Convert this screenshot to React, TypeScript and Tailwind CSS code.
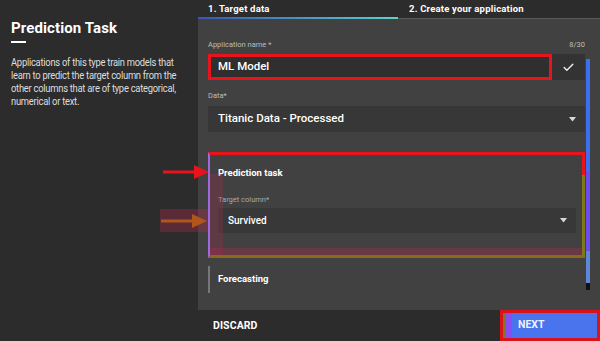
import { Check } from "lucide-react";

const DESC =
  "Applications of this type train models that learn to predict the target column from the other columns that are of type categorical, numerical or text.";

function Caret() {
  return (
    <svg width="7" height="5" viewBox="0 0 7 5" className="shrink-0">
      <path d="M0 0h7L3.5 4.5z" fill="#d8d8d8" />
    </svg>
  );
}

function Arrow({ color, className }: { color: string; className: string }) {
  return (
    <svg width="46" height="14" viewBox="0 0 46 14" className={className}>
      <rect x="0" y="5.5" width="34" height="3" fill={color} />
      <path d="M31 0L46 7L31 14z" fill={color} />
    </svg>
  );
}

export default function App() {
  return (
    <div className="relative flex h-[341px] w-[600px] overflow-hidden bg-[#2c2c2c] font-['Roboto',sans-serif] text-white">
      <aside className="w-[198px] shrink-0 px-[11px] pt-[19px]">
        <h1 className="text-[15px] font-bold leading-[18px] tracking-[0.1px] text-white">Prediction Task</h1>
        <div className="mt-[4px] h-[2px] w-[15px] bg-white" />
        {/* the source font is a condensed face, so squeeze Roboto horizontally */}
        <p className="mt-[13px] w-[194px] origin-left scale-x-[0.87] text-[10.8px] leading-[13px] tracking-[-0.3px] text-[#dedede]">
          {DESC}
        </p>
      </aside>

      <main className="flex min-w-0 flex-1 flex-col">
        <div className="flex h-[19px] shrink-0 text-[9.5px] font-bold">
          <div className="flex w-[200px] flex-col">
            <span className="flex-1 pl-[10px] pt-[2px] tracking-[0.2px]">1. Target data</span>
            <div className="h-[2px] bg-gradient-to-r from-[#3a55b4] to-[#5ed2cc]" />
          </div>
          <div className="flex flex-1 flex-col">
            <span className="flex-1 pl-[11px] pt-[2px] tracking-[0.2px]">2. Create your application</span>
            <div className="h-[1px] bg-[#5a5a5a]" />
          </div>
        </div>

        <div className="flex flex-1 bg-[#414141] pl-[10px] pr-[10px]">
          <div className="flex min-w-0 flex-1 flex-col pt-[21px]">
            <div className="flex h-[10px] items-center justify-between text-[7.5px] text-[#bdbdbd]">
              <span>Application name *</span>
              <span>8/30</span>
            </div>
            <div className="mt-[4px] flex h-[26px]">
              <div className="flex flex-1 items-center border-[3px] border-[#e8141a] bg-[#2f2f2f] pl-[7px] text-[11.5px] font-medium">
                ML Model
              </div>
              <div className="flex w-[33px] items-center justify-center bg-[#333333]">
                <Check size={13} strokeWidth={2.5} color="#f2f2f2" />
              </div>
            </div>

            <div className="mt-[11px] h-[10px] text-[7.5px] leading-[10px] text-[#bdbdbd]">Data*</div>
            <div className="mt-[5px] flex h-[26px] items-center justify-between bg-[#373737] pl-[10px] pr-[9px] text-[11.5px] font-medium">
              <span>Titanic Data - Processed</span>
              <Caret />
            </div>

            <div className="relative mt-[20px] flex h-[106px] flex-col border-t-[3px] border-r-[3px] border-b-[3px] border-l-[2px] border-t-[#e8141a] border-r-[#7f7a16] border-b-[#8a6a1a] border-l-[#9d6ae0] pl-[8px] pr-[6px]">
              <div className="absolute right-[-3px] top-[-3px] h-[23px] w-[3px] bg-[#e8141a]" />
              <div className="pt-[11px] text-[9.5px] font-bold">Prediction task</div>
              <div className="mt-[14px] text-[7.5px] text-[#aaaaaa]">Target column*</div>
              <div className="mt-[2px] flex h-[25px] items-center justify-between bg-[#383838] pl-[10px] pr-[9px] text-[10px] font-medium">
                <span>Survived</span>
                <Caret />
              </div>
              <div className="absolute bottom-[0px] left-0 right-0 h-[7px] bg-[#b4284e]/35" />
              <div className="absolute bottom-[0px] left-0 top-[19px] w-[13px] bg-[#b4284e]/25" />
            </div>

            <div className="mt-[8px] flex h-[27px] items-center border-l-[2px] border-[#777777] pl-[8px] text-[9.5px] font-bold">
              Forecasting
            </div>
          </div>
          <div className="ml-[1px] mt-[40px] mb-[20px] flex w-[4px] flex-col">
            <div className="h-[112px] bg-[#3b6ff0]" />
            <div className="h-[80px] bg-[#6a4cf0]" />
            <div className="flex-1 bg-[#5d88d8]" />
            <div className="h-[7px] bg-[#111111]" />
          </div>
        </div>

        <footer className="flex h-[31px] shrink-0 items-center justify-between pl-[15px]">
          <span className="text-[10.5px] font-bold tracking-[0.1px]">DISCARD</span>
          <div className="flex h-[31px] w-[100px] border-[3px] border-[#d8141a] bg-[#4a74ee]">
            <div className="w-[3px] bg-[#7c7a1c]" />
            <div className="w-[6px] bg-[#8a4df2]" />
            <span className="pl-[6px] pt-[4px] text-[10.5px] font-bold text-[#eef2ff]">NEXT</span>
          </div>
        </footer>
      </main>

      <div className="pointer-events-none absolute left-[160px] top-[209px] h-[23px] w-[48px] bg-[#b4284e]/35" />
      <Arrow color="#e8141a" className="absolute left-[163px] top-[165px]" />
      <Arrow color="#b0561c" className="absolute left-[161px] top-[214px]" />
    </div>
  );
}
